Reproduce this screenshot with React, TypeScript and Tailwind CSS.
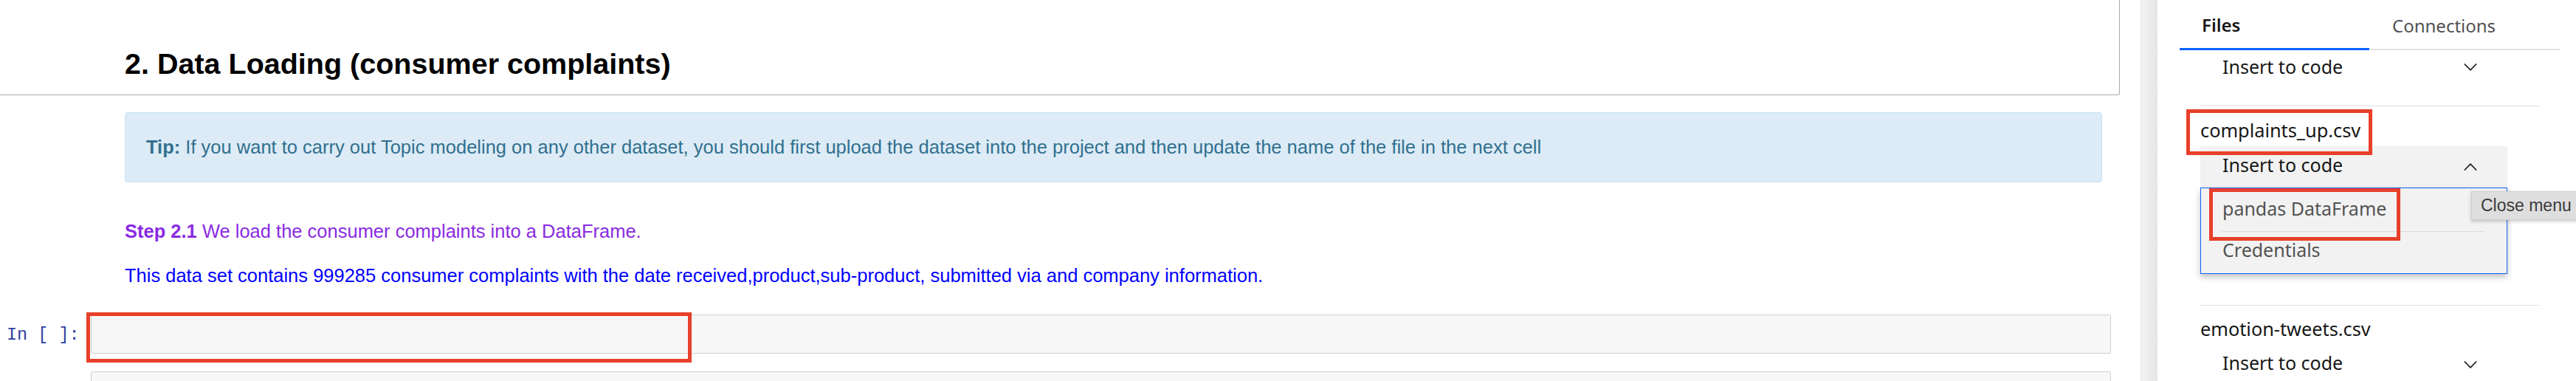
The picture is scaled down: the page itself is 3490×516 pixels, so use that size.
import React from "react";

const Chevron = ({ up = false }: { up?: boolean }) => (
  <svg width="18" height="10" viewBox="0 0 18 10" fill="none" className="shrink-0">
    <polyline
      points={up ? "0.8,9.5 9,1.2 17.2,9.5" : "0.8,0.5 9,8.8 17.2,0.5"}
      stroke="#161616"
      strokeWidth="1.6"
    />
  </svg>
);

const InsertRow = ({ open = false }: { open?: boolean }) => (
  <div
    className={`w-[416px] h-[56px] pl-[30px] pr-[41px] flex items-center justify-between ${
      open ? "bg-[#f2f2f2]" : ""
    }`}
  >
    <span className="-mt-[5px] text-[25px] text-[#161616]">Insert to code</span>
    <Chevron up={open} />
  </div>
);

const Notebook = () => (
  <div className="relative w-[2900px] shrink-0 font-['Liberation_Sans',Arial,sans-serif]">
    {/* markdown heading cell */}
    <div className="w-[2872px] h-[129px] border-r border-b border-[#ababab] rounded-br-[3px] pl-[169px] pt-[62px]">
      <h2 className="text-[39.5px] font-bold leading-[48px] text-black">
        2. Data Loading (consumer complaints)
      </h2>
    </div>

    {/* tip */}
    <div className="mt-[23px] ml-[169px] w-[2679px] h-[95px] border border-[#c4e4f0] bg-[#dcebf6] rounded-[4px] flex items-center pl-[28px] text-[25.5px] text-[#31708f]">
      <p>
        <b>Tip:</b> If you want to carry out Topic modeling on any other dataset, you should first
        upload the dataset into the project and then update the name of the file in the next cell
      </p>
    </div>

    <div className="mt-[46px] ml-[169px] h-[40px] flex items-center text-[25.5px] text-[#8a2be2]">
      <p>
        <b>Step 2.1</b> We load the consumer complaints into a DataFrame.
      </p>
    </div>

    <div className="mt-[20px] ml-[169px] h-[40px] flex items-center text-[25.5px] text-[#0000ff]">
      <p>
        This data set contains 999285 consumer complaints with the date received,product,sub-product,
        submitted via and company information.
      </p>
    </div>

    {/* code cell */}
    <div className="relative mt-[33px] flex">
      <div className="w-[123px] h-[53px] pl-[9px] pt-[3px] flex items-center font-['Liberation_Mono',monospace] text-[23.5px] text-[#303f9f] whitespace-pre">
        In [ ]:
      </div>
      <div className="w-[2737px] h-[53px] bg-[#f7f7f7] border border-[#cfcfcf] rounded-[2px]" />
      <div className="absolute left-[117px] -top-[3px] w-[820px] h-[68px] border-[5px] border-[#e8402a]" />
    </div>

    <div className="mt-[24px] ml-[123px] w-[2737px] h-[60px] bg-[#f7f7f7] border border-[#cfcfcf] rounded-[2px]" />
  </div>
);

const SidePanel = () => (
  <div className="relative w-[567px] shrink-0 h-full bg-white font-['Noto_Sans','Open_Sans',sans-serif]">
    {/* tabs */}
    <div className="flex gap-[2px] pl-[30px]">
      <div className="w-[257px] h-[68px] border-b-[3px] border-[#0f62fe] pl-[30px] pt-[3px] flex items-center text-[24px] font-semibold text-[#161616]">
        Files
      </div>
      <div className="w-[257px] h-[68px] border-b-2 border-[#e0e0e0] pl-[29px] pt-[3px] flex items-center text-[24px] text-[#525252]">
        Connections
      </div>
    </div>

    <div className="pl-[58px] pr-[50px]">
      <div className="h-[76px] border-b border-[#e0e0e0]">
        <div className="h-[45px] w-[416px] pl-[30px] pr-[41px] flex items-center justify-between">
          <span className="text-[25px] text-[#161616]">Insert to code</span>
          <Chevron />
        </div>
      </div>

      <div className="mt-[13px] h-[40px] flex items-center text-[25.3px] text-[#161616]">
        complaints_up.csv
      </div>
      <div className="mt-[1px]">
        <InsertRow open />
      </div>

      {/* open menu */}
      <div className="w-[416px] border border-[#0f62fe] bg-[#f2f2f2] shadow-[0_4px_8px_rgba(0,0,0,0.25)] text-[25px] text-[#525252]">
        <div className="h-[58px] pl-[29px] pb-[3px] flex items-center">pandas DataFrame</div>
        <div className="ml-[28px] mr-[29px] h-px bg-[#dcdcdc]" />
        <div className="h-[56px] pl-[29px] pb-[7px] flex items-center">Credentials</div>
      </div>

      <div className="mt-[42px] h-px bg-[#e0e0e0]" />

      <div className="mt-[11px] h-[41px] flex items-center text-[25.3px] text-[#161616]">
        emotion-tweets.csv
      </div>
      <InsertRow />
    </div>

    {/* annotation boxes */}
    <div className="absolute left-[39px] top-[148px] w-[252px] h-[62px] border-[5px] border-[#e8402a]" />
    <div className="absolute left-[70px] top-[255px] w-[259px] h-[71px] border-[5px] border-[#e8402a]" />

    {/* tooltip */}
    <div className="absolute left-[425px] top-[259px] h-[39px] pl-[12px] pr-[14px] flex items-center bg-[#dedede] border border-[#cdcdcd] shadow-[0_2px_5px_rgba(0,0,0,0.2)] font-['Liberation_Sans',Arial,sans-serif] text-[23px] text-[#3a3a3a] whitespace-nowrap">
      Close menu
    </div>
  </div>
);

export default function App() {
  return (
    <div className="flex w-[3490px] h-[516px] overflow-hidden bg-white">
      <Notebook />
      <div className="w-[23px] shrink-0 h-full border-l border-[#e3e3e3] bg-linear-to-r from-[#f3f3f3] to-[#e6e6e6]" />
      <SidePanel />
    </div>
  );
}
